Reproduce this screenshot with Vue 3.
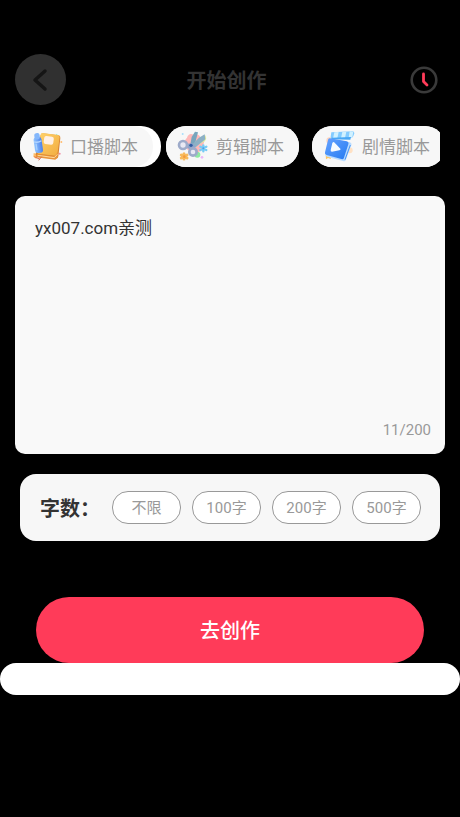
<script setup>
import { computed, ref } from 'vue'

const scripts = [
  { id: 'talk', label: '口播脚本' },
  { id: 'edit', label: '剪辑脚本' },
  { id: 'story', label: '剧情脚本' },
]
const lengths = ['不限', '100字', '200字', '500字']
const maxLength = 200

const activeScript = ref('talk')
const activeLength = ref('')
const content = ref('yx007.com亲测')
const counter = computed(() => `${content.value.length}/${maxLength}`)
</script>

<template>
  <main class="page" lang="zh-CN">
    <header class="header">
      <button class="back" type="button" aria-label="返回">
        <svg viewBox="0 0 51 51" aria-hidden="true">
          <path d="M30 17 20 26 30 35" fill="none" stroke="#151515" stroke-width="3.500" stroke-linecap="round" stroke-linejoin="round" />
        </svg>
      </button>
      <h1 class="title">开始创作</h1>
      <button class="history" type="button" aria-label="历史记录">
        <svg viewBox="0 0 28 28" aria-hidden="true">
          <circle cx="14" cy="14" r="12.300" fill="none" stroke="#3a3a3a" stroke-width="2.600" />
          <path d="M13.500 8v7.500l3.500 3.500" fill="none" stroke="#ff3b59" stroke-width="2.800" stroke-linecap="round" stroke-linejoin="round" />
        </svg>
      </button>
    </header>

    <nav class="scripts" aria-label="脚本类型">
      <div
        v-for="item in scripts"
        :key="item.id"
        class="script-slot"
        :class="{ active: activeScript === item.id }"
      >
        <button class="script" type="button" @click="activeScript = item.id">
          <svg v-if="item.id === 'talk'" class="script-icon" viewBox="0 0 96 96" aria-hidden="true">
            <defs>
              <linearGradient id="book" x1="0" y1="0" x2="1" y2="1">
                <stop offset="0" stop-color="#ffd36b" />
                <stop offset="1" stop-color="#f2ac3f" />
              </linearGradient>
              <linearGradient id="mic" x1="0" y1="0" x2="1" y2="0">
                <stop offset="0" stop-color="#91c4ff" />
                <stop offset="1" stop-color="#4c82ea" />
              </linearGradient>
            </defs>
            <path d="M8 66 20 70 16 84 7 77Z" fill="#ffbd69" />
            <path d="M77 8 82 14 79 18 74 13Z" fill="#93edc9" />
            <circle cx="91" cy="33" r="3" fill="#ffbc70" />
            <circle cx="86" cy="68" r="3" fill="#f18ba3" />
            <path d="M35 7 82 13Q89 14 88 21L82 76Q81 84 74 83L20 77Q13 76 14 69L29 12Q30 7 35 7Z" fill="#d98430" />
            <path d="M34 6 81 12Q87 13 86 19L79 70Q78 75 73 74L22 68Q17 67 19 61L29 11Q30 6 34 6Z" fill="url(#book)" />
            <path d="M18 69 70 76 82 62 80 79 73 86 14 79Z" fill="#e9943a" />
            <path d="M20 73 70 80 79 70" fill="none" stroke="#ffd99a" stroke-width="3" />
            <rect x="39" y="16" width="29" height="24" rx="6" transform="rotate(8 53 26)" fill="#fff0e4" />
            <path d="M10 77 27 85M32 77 23 88" stroke="#de704b" stroke-width="3" />
            <g transform="rotate(-8 20 36)">
              <rect x="9" y="19" width="24" height="47" rx="8" fill="url(#mic)" />
              <rect x="13" y="6" width="16" height="19" rx="6" fill="#84b7fb" />
              <path d="M10 31Q21 36 32 31" fill="none" stroke="#b5d6ff" stroke-width="4" />
              <path d="M15 39v16" stroke="#a8d0ff" stroke-width="4" stroke-linecap="round" />
            </g>
          </svg>

          <svg v-else-if="item.id === 'edit'" class="script-icon" viewBox="0 0 96 96" aria-hidden="true">
            <path d="M30 20Q35 5 50 11Q66 6 71 21Q87 28 78 43Q80 59 65 63Q50 71 40 58Q25 58 27 43Q19 30 30 20Z" fill="#ffb8b8" />
            <circle cx="17" cy="9" r="3" fill="#a8defa" />
            <circle cx="75" cy="79" r="4" fill="#eab6f7" />
            <circle cx="61" cy="71" r="9" fill="#8ee9a1" />
            <g stroke="#76cbf5" stroke-width="7" stroke-linecap="round">
              <path d="M79 43v18M70 47l18 10M70 57l18-10" />
            </g>
            <circle cx="79" cy="52" r="3" fill="#4d9de8" />
            <g stroke="#f8b95a" stroke-width="9" stroke-linecap="round">
              <path d="M21 68v16M13 72l17 9M13 81l17-9" />
            </g>
            <circle cx="22" cy="77" r="4" fill="#f49a3a" />
            <path d="M84 12Q92 22 82 32L66 40 68 23Z" fill="#dfeaa0" />
            <path d="M54 2 63 4 53 41 40 40 44 18Z" fill="#78a5bd" />
            <path d="M83 10 85 25 52 52 42 44 66 20Z" fill="#8cb0c5" />
            <path d="M25 40 45 36 54 45 46 57 31 52Z" fill="#8fa3c9" />
            <circle cx="18" cy="42" r="12" fill="#e8e8f3" stroke="#9eabca" stroke-width="8" />
            <circle cx="48" cy="63" r="11" fill="#e8e8f3" stroke="#9eabca" stroke-width="8" />
            <circle cx="42" cy="43" r="5" fill="#315ea4" />
          </svg>

          <svg v-else class="script-icon" viewBox="0 0 96 96" aria-hidden="true">
            <defs>
              <linearGradient id="clip" x1="0" y1="0" x2="1" y2="1">
                <stop offset="0" stop-color="#67a3ff" />
                <stop offset="1" stop-color="#257bf1" />
              </linearGradient>
            </defs>
            <circle cx="20" cy="29" r="10" fill="#ffd3bd" />
            <circle cx="80" cy="58" r="9" fill="#ffe1c4" />
            <path d="M8 70 15 75 21 73 24 84 15 81 9 85Z" fill="#ffc45b" />
            <path d="M25 4 88 1Q94 1 94 7L91 15Q90 20 84 20L28 23Q22 23 23 17Z" fill="#83cbff" />
            <path d="M34 4 47 3 43 22 30 23ZM58 3 70 2 66 21 54 22ZM80 1 91 2 88 19 77 20Z" fill="#d0f1ff" />
            <path d="M26 20 84 18 82 26 24 25Z" fill="#48a7f5" />
            <path d="M23 23 80 34Q87 36 85 43L68 88Q66 92 60 90L12 77Q6 75 8 69Z" fill="#b9dcff" />
            <path d="M21 22 71 31Q78 33 76 40L63 80Q61 86 55 84L11 72Q4 70 6 64L15 27Q16 21 21 22Z" fill="url(#clip)" />
            <path d="M82 42 66 86" stroke="#4895f6" stroke-width="3" />
            <path d="M28 36Q31 31 35 35L52 53Q54 57 49 58L27 62Q22 62 23 57Z" fill="#f7fbff" />
          </svg>
          <span>{{ item.label }}</span>
        </button>
      </div>
    </nav>

    <section class="editor">
      <textarea v-model="content" class="input" :maxlength="maxLength" aria-label="创作内容"></textarea>
      <span class="counter">{{ counter }}</span>
    </section>

    <section class="length" aria-labelledby="length-label">
      <h2 id="length-label" class="length-label">字数：</h2>
      <div class="options">
        <button
          v-for="option in lengths"
          :key="option"
          class="option"
          type="button"
          :aria-pressed="activeLength === option"
          @click="activeLength = option"
        >{{ option }}</button>
      </div>
    </section>

    <button class="submit" type="button">去创作</button>
    <div class="sheet"></div>
  </main>
</template>

<style>
body {
  background: #000;
}
</style>

<style scoped>
.page {
  display: flex;
  flex-direction: column;
  min-height: 100vh;
  box-sizing: border-box;
  padding-top: 54px;
  background: #000;
  font-family: Roboto, "Noto Sans CJK SC", sans-serif;
}

button {
  margin: 0;
  padding: 0;
  border: 0;
  background: none;
  font-family: inherit;
  cursor: pointer;
}

svg {
  display: block;
}

.header {
  display: grid;
  grid-template-columns: 51px 1fr 51px;
  align-items: center;
  padding: 0 22px 0 15px;
}

.back {
  width: 51px;
  height: 51px;
  border-radius: 50%;
  background: #303030;
}

.title {
  margin: 0;
  padding-top: 2px;
  color: #333;
  font-size: 20px;
  font-weight: 700;
  line-height: 28px;
  text-align: center;
}

.history {
  justify-self: end;
  width: 28px;
  height: 28px;
}

.scripts {
  display: flex;
  margin: 21px 20px 0;
  overflow: hidden;
}

.script-slot {
  flex: none;
  margin-right: 13px;
  border-radius: 20px;
  background: #f7f7f7;
}

.script-slot.active {
  margin-right: 5px;
  padding-right: 8px;
  background: #fff;
}

.script {
  display: flex;
  align-items: center;
  gap: 7px;
  width: 133px;
  height: 41px;
  padding-left: 11px;
  border-radius: 20px;
  background: #f7f7f7;
  color: #999;
  font-size: 17px;
  line-height: 24px;
  white-space: nowrap;
}

.script-icon {
  flex: none;
  width: 32px;
  height: 32px;
}

.editor {
  display: flex;
  flex-direction: column;
  margin: 29px 15px 0;
  padding: 20px 14px 14px 20px;
  border-radius: 10px;
  background: #f9f9f9;
}

.input {
  height: 204px;
  padding: 0;
  border: 0;
  outline: 0;
  background: transparent;
  color: #333;
  font-family: inherit;
  font-size: 17px;
  line-height: 24px;
  resize: none;
}

.counter {
  align-self: flex-end;
  color: #999;
  font-size: 15px;
  line-height: 20px;
}

.length {
  display: flex;
  align-items: center;
  margin: 20px 20px 0;
  padding: 17px 19px 17px 20px;
  border-radius: 16px;
  background: #f7f7f7;
}

.length-label {
  flex: none;
  width: 72px;
  margin: 0;
  padding-top: 2px;
  color: #333;
  font-size: 20px;
  font-weight: 700;
  line-height: 28px;
  white-space: nowrap;
}

.options {
  display: grid;
  flex: 1;
  grid-template-columns: repeat(4, 1fr);
  gap: 11px;
}

.option {
  height: 33px;
  border: 1px solid #999;
  border-radius: 16px;
  background: #fff;
  color: #999;
  font-size: 15px;
  line-height: 20px;
}

.submit {
  height: 66px;
  margin: 56px 36px 0;
  padding-top: 2px;
  border-radius: 33px;
  background: #ff3b59;
  color: #fff;
  font-size: 20px;
  font-weight: 500;
  line-height: 28px;
}

.sheet {
  height: 32px;
  border-radius: 16px;
  background: #fff;
}
</style>
